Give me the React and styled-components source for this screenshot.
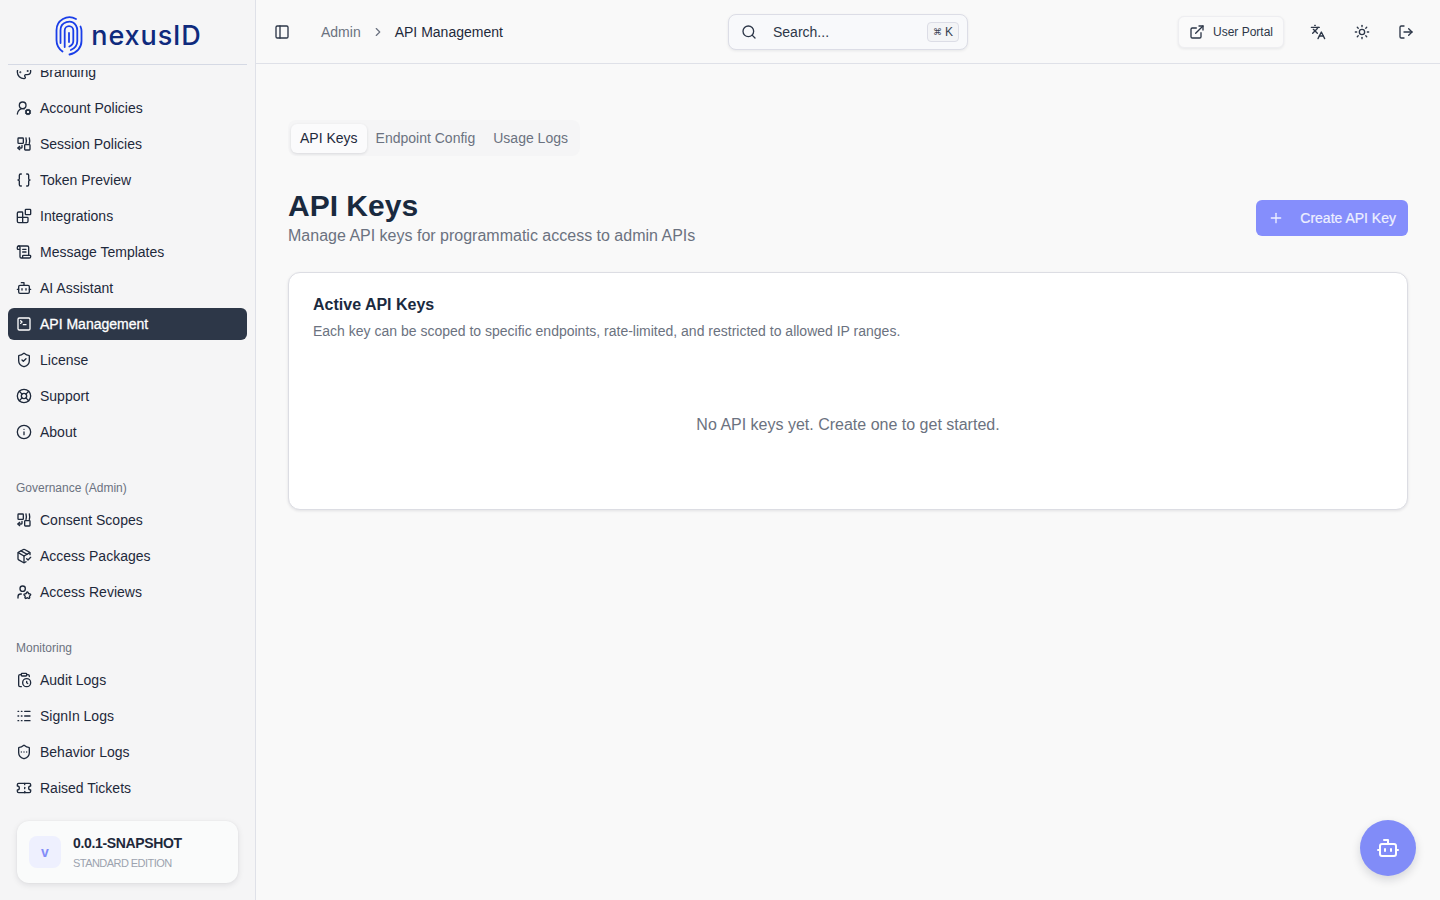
import React from 'react';
import styled, { createGlobalStyle } from 'styled-components';
import {
  Palette, UserRoundCog, Braces, Blocks, ScrollText, Bot, SquareTerminal, ShieldCheck, LifeBuoy, Info,
  PackageCheck, UserStar, ClipboardClock, Logs, ShieldEllipsis, Ticket, PanelLeft, ChevronRight, Search,
  ExternalLink, Languages, Sun, LogOut, Plus,
} from 'lucide-react';

const GlobalStyle = createGlobalStyle`
  html, body { margin: 0; padding: 0; height: 100%; }
  body {
    font-family: "Liberation Sans", Arial, sans-serif;
    background: #f9f9f9;
    color: #1e293b;
  }
  * { box-sizing: border-box; }
`;

// two-way scope icon, not in the icon package
const ScopeIcon = () => (
  <svg width="16" height="16" viewBox="0 0 24 24" fill="none" stroke="currentColor" strokeWidth="2" strokeLinecap="round" strokeLinejoin="round">
    <rect x="3" y="3" width="8" height="8" rx="1" />
    <path d="M15 3c.7 2.6.7 5.4 0 8" />
    <path d="M20 3c.7 2.6.7 5.4 0 8" />
    <rect x="13" y="13" width="8" height="8" rx="1" />
    <path d="M9 14v3a1 1 0 0 1-1 1H3" />
    <path d="m5.5 15.5-2.5 2.5 2.5 2.5" />
  </svg>
);

const FingerprintLogo = () => (
  <svg width="28" height="40" viewBox="0 0 28 40" fill="none" stroke="#1a3ee8" strokeWidth="1.8" strokeLinecap="round">
    <path d="M21 3A13 13 0 0 0 1.5 14.5V24c0 5.5 2.5 9 6 11.5" />
    <path d="M25.5 10.5a13 13 0 0 1 1 4.5v10c0 6.5-4.5 12-12 13.5" />
    <path d="M5.5 27V14.5A8.5 8.5 0 0 1 21 9.5c.8 1.4 1.3 3 1.3 5V25c0 4.5-3 7.5-6.5 9" />
    <path d="M9.7 31V14.5a4.3 4.3 0 0 1 8.6 0V25c0 2.5-1.5 4.5-4 5.5" />
    <path d="M14 17v9" />
  </svg>
);

const Layout = styled.div`
  display: flex;
  height: 100vh;
  overflow: hidden;
`;

const Sidebar = styled.aside`
  width: 256px;
  flex-shrink: 0;
  display: flex;
  flex-direction: column;
  background: #f5f5f6;
  border-right: 1px solid #dfe1e8;
`;

const Brand = styled.div`
  height: 65px;
  margin: 0 8px;
  padding: 7px 0 0 2px;
  flex-shrink: 0;
  display: flex;
  align-items: center;
  justify-content: center;
  gap: 8px;
  border-bottom: 1px solid #d5d9e4;
`;

const BrandName = styled.span`
  font-family: Inter, sans-serif;
  font-size: 27px;
  line-height: 1;
  font-weight: 500;
  letter-spacing: 0.9px;
  color: #0f2a7d;
`;

const Nav = styled.nav`
  flex: 1;
  overflow: hidden;
  margin-top: 5px;
  padding: 0 8px;
`;

const NavScroll = styled.div`
  margin-top: -14px;
`;

const NavGroup = styled.div`
  display: flex;
  flex-direction: column;
  gap: 4px;
  margin-bottom: 24px;
`;

const GroupLabel = styled.div`
  height: 32px;
  margin-bottom: -4px;
  padding: 0 8px;
  display: flex;
  align-items: center;
  font-size: 12px;
  color: #6b7280;
`;

const NavItem = styled.a`
  height: 32px;
  padding: 0 8px;
  display: flex;
  align-items: center;
  gap: 8px;
  border-radius: 6px;
  font-size: 14px;
  font-weight: 400;
  color: ${p => (p.$active ? '#ffffff' : '#1e293b')};
  background: ${p => (p.$active ? '#2d3748' : 'transparent')};
  -webkit-text-stroke: ${p => (p.$active ? '0.3px' : '0')};
  svg { flex-shrink: 0; }
`;

const VersionCard = styled.div`
  margin: 0 17px 17px;
  height: 62px;
  flex-shrink: 0;
  display: flex;
  align-items: center;
  gap: 12px;
  padding: 0 12px;
  border-radius: 12px;
  background: #fafbfb;
  box-shadow: 0 2px 6px rgba(15, 23, 42, 0.1), 0 0 2px rgba(15, 23, 42, 0.05);
`;

const VersionBadge = styled.div`
  width: 32px;
  height: 32px;
  border-radius: 8px;
  background: #eef0fe;
  color: #818cf8;
  display: flex;
  align-items: center;
  justify-content: center;
  font-size: 14px;
  font-weight: 700;
`;

const VersionText = styled.div`
  display: flex;
  flex-direction: column;
  gap: 4px;
`;

const VersionName = styled.span`
  font-size: 14px;
  line-height: 18px;
  font-weight: 700;
  letter-spacing: -0.35px;
  color: #1e293b;
`;

const VersionEdition = styled.span`
  font-size: 11px;
  line-height: 14px;
  letter-spacing: -0.55px;
  color: #9ca3af;
`;

const Main = styled.div`
  flex: 1;
  min-width: 0;
  display: flex;
  flex-direction: column;
`;

const Topbar = styled.header`
  height: 64px;
  flex-shrink: 0;
  display: grid;
  grid-template-columns: 1fr 240px 1fr;
  align-items: center;
  padding: 0 16px;
  border-bottom: 1px solid #dfe1e8;
  background: #f9f9f9;
`;

const TopLeft = styled.div`
  margin-left: -8px;
  display: flex;
  align-items: center;
`;

const TopRight = styled.div`
  display: flex;
  align-items: center;
  justify-content: flex-end;
  gap: 8px;
`;

const IconButton = styled.button`
  width: 36px;
  height: 36px;
  padding: 0;
  border: 0;
  background: transparent;
  color: #2d3748;
  display: flex;
  align-items: center;
  justify-content: center;
`;

const Breadcrumb = styled.div`
  margin-left: 21px;
  display: flex;
  align-items: center;
  gap: 10px;
  font-size: 14px;
  color: #6b7280;
  strong { font-weight: 400; color: #1e293b; }
`;

const SearchBox = styled.div`
  height: 36px;
  display: flex;
  align-items: center;
  gap: 16px;
  padding: 0 8px 0 12px;
  border: 1px solid #dcdde6;
  border-radius: 8px;
  background: #f8f9fb;
  box-shadow: 0 1px 3px rgba(15, 23, 42, 0.08);
  font-size: 14px;
  color: #2d3748;
`;

const Kbd = styled.kbd`
  margin-left: auto;
  height: 20px;
  width: 32px;
  display: flex;
  align-items: center;
  justify-content: center;
  gap: 3px;
  border: 1px solid #dcdde6;
  border-radius: 4px;
  background: #f3f4f6;
  font-family: "Liberation Sans", sans-serif;
  font-size: 12px;
  color: #374151;
  span { font-size: 9px; }
`;

const PortalButton = styled.button`
  height: 32px;
  width: 106px;
  margin-right: 8px;
  display: flex;
  align-items: center;
  justify-content: center;
  gap: 8px;
  border: 1px solid #eeeef1;
  border-radius: 6px;
  background: #fafafa;
  box-shadow: 0 1px 3px rgba(15, 23, 42, 0.08);
  font-family: inherit;
  font-size: 12px;
  color: #2d3748;
`;

const Content = styled.main`
  flex: 1;
  padding: 56px 32px 32px;
`;

const TabList = styled.div`
  display: inline-flex;
  height: 36px;
  padding: 4px 3px 3px;
  border-radius: 8px;
  background: #f5f5f6;
`;

const Tab = styled.button`
  border: 0;
  padding: 0 9px 1px;
  border-radius: 6px;
  font-family: inherit;
  font-size: 14px;
  color: ${p => (p.$active ? '#1e293b' : '#6b7280')};
  background: ${p => (p.$active ? '#fbfbfc' : 'transparent')};
  box-shadow: ${p => (p.$active ? '0 1px 3px rgba(15, 23, 42, 0.12)' : 'none')};
`;

const PageHead = styled.div`
  margin-top: 32px;
  display: flex;
  align-items: center;
  justify-content: space-between;
`;

const PageTitle = styled.h1`
  margin: 0;
  font-size: 30px;
  line-height: 36px;
  font-weight: 700;
  color: #1a2a3f;
`;

const PageSub = styled.p`
  margin: 0;
  font-size: 16px;
  line-height: 24px;
  color: #6b7280;
`;

const CreateButton = styled.button`
  height: 36px;
  padding: 0 12px;
  display: flex;
  align-items: center;
  gap: 16px;
  border: 0;
  border-radius: 6px;
  background: #858efc;
  color: #eef0ff;
  font-family: inherit;
  font-size: 14px;
  -webkit-text-stroke: 0.2px;
`;

const Card = styled.section`
  margin-top: 24px;
  height: 238px;
  padding: 24px;
  display: flex;
  flex-direction: column;
  background: #ffffff;
  border: 1px solid #dcdde3;
  border-radius: 12px;
  box-shadow: 0 1px 3px rgba(15, 23, 42, 0.1);
`;

const CardTitle = styled.h2`
  margin: 0;
  font-size: 16px;
  line-height: 16px;
  font-weight: 700;
  color: #1a2a3f;
`;

const CardDesc = styled.p`
  margin: 8px 0 0;
  font-size: 14px;
  line-height: 20px;
  color: #6b7280;
`;

const EmptyState = styled.div`
  margin-top: 72px;
  text-align: center;
  font-size: 16px;
  line-height: 24px;
  color: #6b7280;
`;

const AssistantFab = styled.button`
  position: fixed;
  right: 24px;
  bottom: 24px;
  width: 56px;
  height: 56px;
  padding: 0;
  border: 0;
  border-radius: 50%;
  background: #818cf8;
  color: #ffffff;
  display: flex;
  align-items: center;
  justify-content: center;
  box-shadow: 0 4px 10px rgba(15, 23, 42, 0.15);
`;

const groups = [
  {
    items: [
      { label: 'Branding', icon: <Palette size={16} /> },
      { label: 'Account Policies', icon: <UserRoundCog size={16} /> },
      { label: 'Session Policies', icon: <ScopeIcon /> },
      { label: 'Token Preview', icon: <Braces size={16} /> },
      { label: 'Integrations', icon: <Blocks size={16} /> },
      { label: 'Message Templates', icon: <ScrollText size={16} /> },
      { label: 'AI Assistant', icon: <Bot size={16} /> },
      { label: 'API Management', icon: <SquareTerminal size={16} />, active: true },
      { label: 'License', icon: <ShieldCheck size={16} /> },
      { label: 'Support', icon: <LifeBuoy size={16} /> },
      { label: 'About', icon: <Info size={16} /> },
    ],
  },
  {
    title: 'Governance (Admin)',
    items: [
      { label: 'Consent Scopes', icon: <ScopeIcon /> },
      { label: 'Access Packages', icon: <PackageCheck size={16} /> },
      { label: 'Access Reviews', icon: <UserStar size={16} /> },
    ],
  },
  {
    title: 'Monitoring',
    items: [
      { label: 'Audit Logs', icon: <ClipboardClock size={16} /> },
      { label: 'SignIn Logs', icon: <Logs size={16} /> },
      { label: 'Behavior Logs', icon: <ShieldEllipsis size={16} /> },
      { label: 'Raised Tickets', icon: <Ticket size={16} /> },
    ],
  },
];

export default function App() {
  return (
    <>
      <GlobalStyle />
      <Layout>
        <Sidebar>
          <Brand>
            <FingerprintLogo />
            <BrandName>nexusID</BrandName>
          </Brand>
          <Nav>
            <NavScroll>
              {groups.map((group, index) => (
                <NavGroup key={index}>
                  {group.title && <GroupLabel>{group.title}</GroupLabel>}
                  {group.items.map(item => (
                    <NavItem key={item.label} $active={item.active}>
                      {item.icon}
                      {item.label}
                    </NavItem>
                  ))}
                </NavGroup>
              ))}
            </NavScroll>
          </Nav>
          <VersionCard>
            <VersionBadge>v</VersionBadge>
            <VersionText>
              <VersionName>0.0.1-SNAPSHOT</VersionName>
              <VersionEdition>STANDARD EDITION</VersionEdition>
            </VersionText>
          </VersionCard>
        </Sidebar>
        <Main>
          <Topbar>
            <TopLeft>
              <IconButton><PanelLeft size={16} /></IconButton>
              <Breadcrumb>
                Admin
                <ChevronRight size={14} />
                <strong>API Management</strong>
              </Breadcrumb>
            </TopLeft>
            <SearchBox>
              <Search size={16} />
              Search...
              <Kbd><span>⌘</span>K</Kbd>
            </SearchBox>
            <TopRight>
              <PortalButton><ExternalLink size={16} />User Portal</PortalButton>
              <IconButton><Languages size={16} /></IconButton>
              <IconButton><Sun size={16} /></IconButton>
              <IconButton><LogOut size={16} /></IconButton>
            </TopRight>
          </Topbar>
          <Content>
            <TabList>
              <Tab $active>API Keys</Tab>
              <Tab>Endpoint Config</Tab>
              <Tab>Usage Logs</Tab>
            </TabList>
            <PageHead>
              <div>
                <PageTitle>API Keys</PageTitle>
                <PageSub>Manage API keys for programmatic access to admin APIs</PageSub>
              </div>
              <CreateButton><Plus size={16} />Create API Key</CreateButton>
            </PageHead>
            <Card>
              <CardTitle>Active API Keys</CardTitle>
              <CardDesc>Each key can be scoped to specific endpoints, rate-limited, and restricted to allowed IP ranges.</CardDesc>
              <EmptyState>No API keys yet. Create one to get started.</EmptyState>
            </Card>
          </Content>
        </Main>
      </Layout>
      <AssistantFab><Bot size={24} /></AssistantFab>
    </>
  );
}
